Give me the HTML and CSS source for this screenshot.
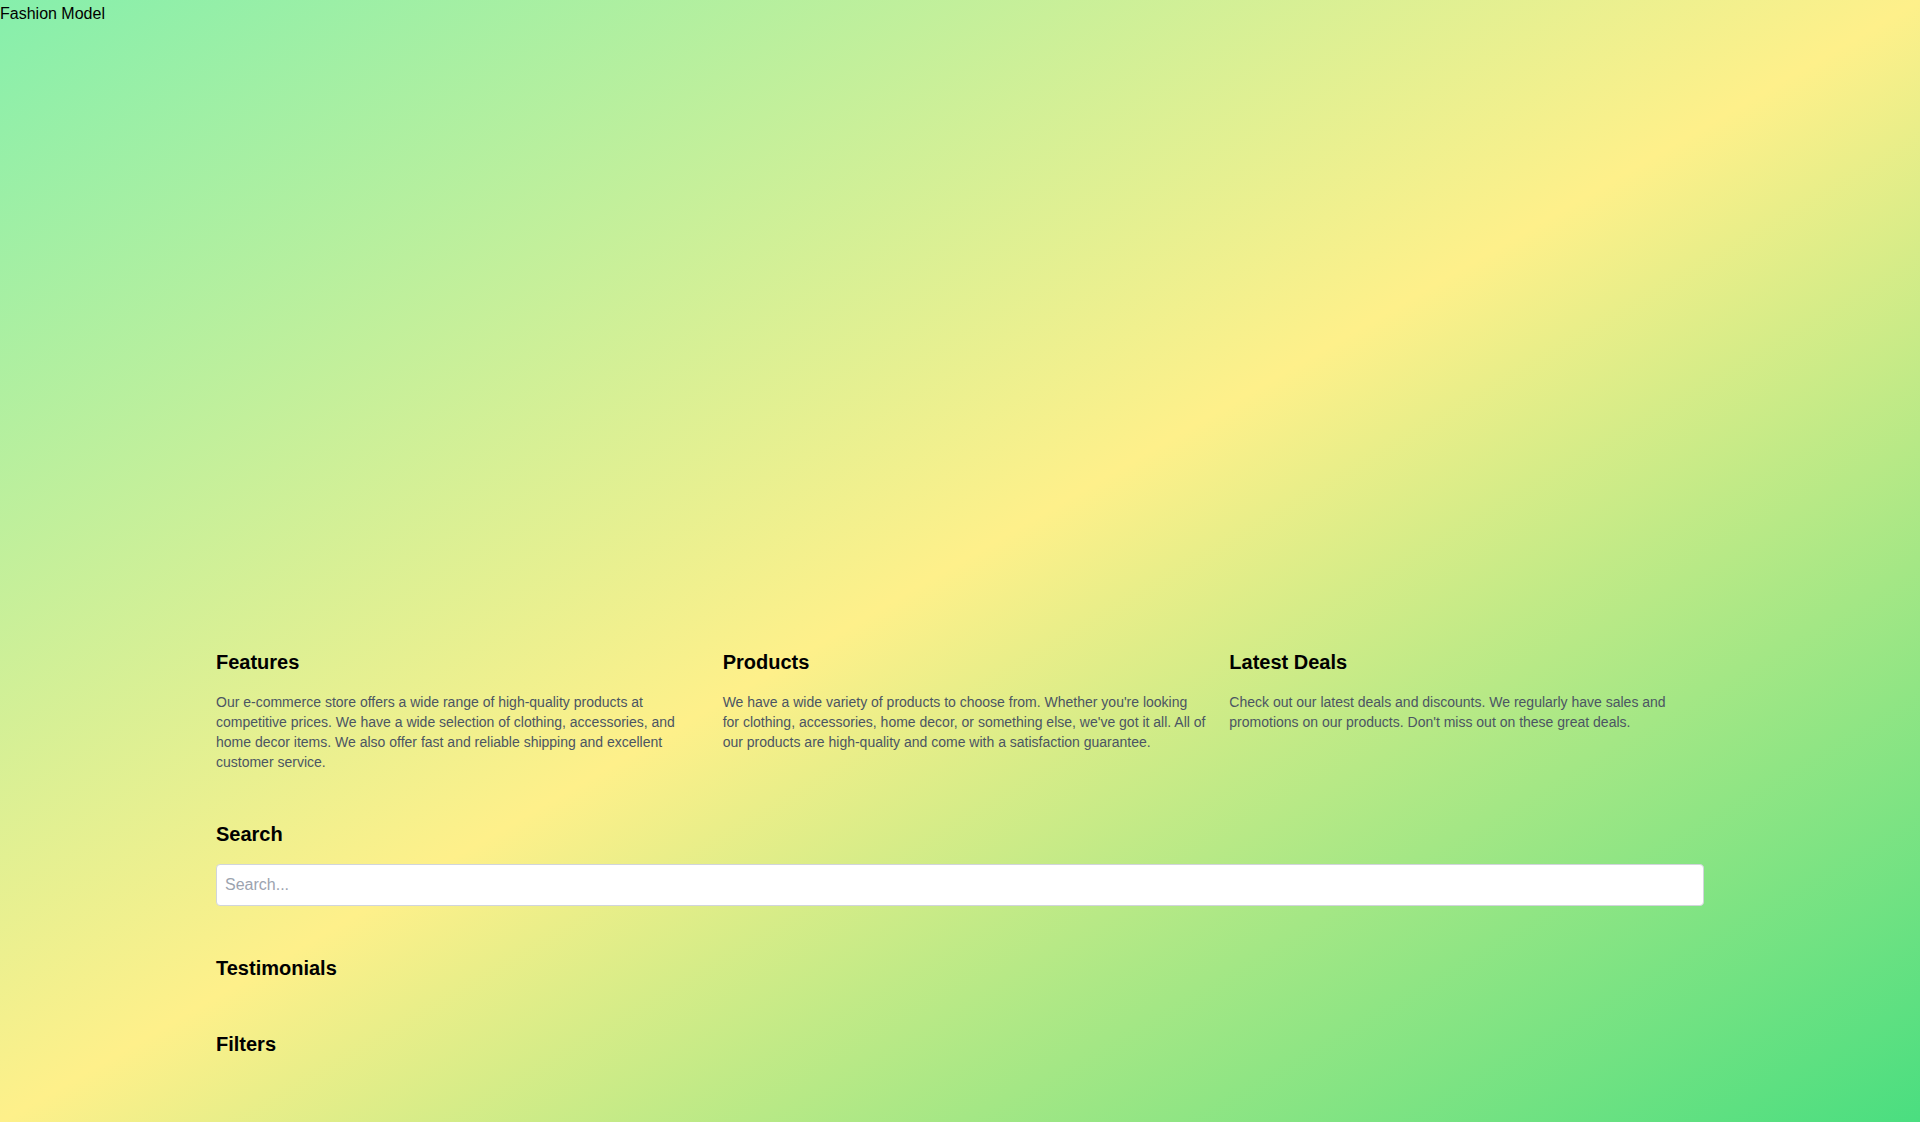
FILE: index.html
```html
<!DOCTYPE html>
<html lang="en">
<head>
<meta charset="utf-8">
<title>Store</title>
<link rel="stylesheet" href="styles.css">
</head>
<body>
<div class="page">
  <div class="hero"><span class="hero-alt">Fashion Model</span></div>
  <main class="container">
    <section class="features">
      <div class="card">
        <h2 class="title">Features</h2>
        <p class="text">Our e-commerce store offers a wide range of high-quality products at<br>competitive prices. We have a wide selection of clothing, accessories, and<br>home decor items. We also offer fast and reliable shipping and excellent<br>customer service.</p>
      </div>
      <div class="card">
        <h2 class="title">Products</h2>
        <p class="text">We have a wide variety of products to choose from. Whether you're looking<br>for clothing, accessories, home decor, or something else, we've got it all. All of<br>our products are high-quality and come with a satisfaction guarantee.</p>
      </div>
      <div class="card">
        <h2 class="title">Latest Deals</h2>
        <p class="text">Check out our latest deals and discounts. We regularly have sales and<br>promotions on our products. Don't miss out on these great deals.</p>
      </div>
    </section>
    <section class="block">
      <h2 class="title">Search</h2>
      <input class="search" type="text" placeholder="Search...">
    </section>
    <section class="block">
      <h2 class="title">Testimonials</h2>
    </section>
    <section class="block">
      <h2 class="title">Filters</h2>
    </section>
  </main>
</div>
</body>
</html>
```
FILE: styles.css
```css
html, body {
  margin: 0;
  padding: 0;
}

body {
  font-family: "Liberation Sans", Arial, sans-serif;
  font-size: 16px;
  line-height: 24px;
  color: #000;
}

.page {
  min-height: 100vh;
  background: linear-gradient(to bottom right, #86efac, #fef08a, #4ade80);
}

.hero {
  height: 600px;
}

.hero-alt {
  display: inline-block;
  padding-top: 2px;
  font-size: 16px;
  line-height: 24px;
}

.container {
  max-width: 1536px;
  margin: 0 auto;
  padding: 48px 24px;
  box-sizing: border-box;
  display: flex;
  flex-direction: column;
  gap: 48px;
}

.features {
  display: grid;
  grid-template-columns: repeat(3, minmax(0, 1fr));
  gap: 32px;
}

.card {
  min-width: 0;
}

.title {
  margin: 0 0 16px;
  font-size: 20px;
  line-height: 28px;
  font-weight: 700;
  color: #000;
}

.block .title:last-child {
  margin-bottom: 0;
}

.text {
  margin: 0;
  font-size: 14px;
  line-height: 20px;
  color: #4b5563;
  white-space: nowrap;
}

.search {
  display: block;
  width: 100%;
  box-sizing: border-box;
  padding: 8px;
  border: 1px solid #d1d5db;
  border-radius: 4px;
  background: #fff;
  font-family: inherit;
  font-size: 16px;
  line-height: 24px;
  color: #111827;
  outline: none;
}

.search::placeholder {
  color: #9ca3af;
}
```
